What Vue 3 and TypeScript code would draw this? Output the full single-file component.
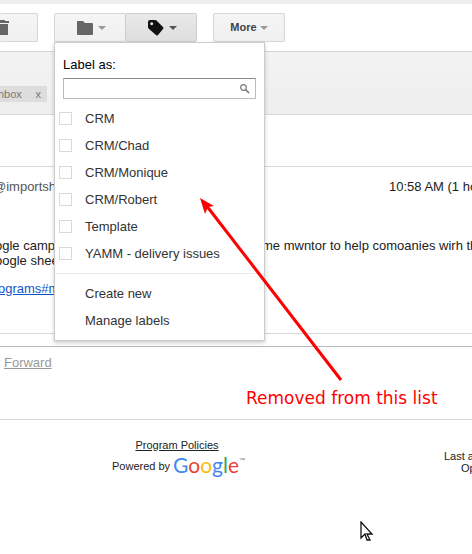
<script setup lang="ts">
import { ref } from 'vue'

interface Label {
  id: string
  name: string
  checked: boolean
}

const query = ref('')
const labels = ref<Label[]>([
  { id: 'crm', name: 'CRM', checked: false },
  { id: 'chad', name: 'CRM/Chad', checked: false },
  { id: 'monique', name: 'CRM/Monique', checked: false },
  { id: 'robert', name: 'CRM/Robert', checked: false },
  { id: 'template', name: 'Template', checked: false },
  { id: 'yamm', name: 'YAMM - delivery issues', checked: false },
])
</script>

<template>
  <div class="page">
    <header class="toolbar">
      <button class="btn trash" type="button" aria-label="Delete">
        <svg width="14" height="16" viewBox="0 0 14 16">
          <path d="M0 1h4V0h6v1h4v2H0zM1 4h12v11H1z" fill="#666" />
        </svg>
      </button>
      <div class="group">
        <button class="btn folder" type="button" aria-label="Move to">
          <svg width="16" height="14" viewBox="0 0 16 14">
            <path d="M1 0h5l2 2h7q1 0 1 1v10q0 1-1 1H1q-1 0-1-1V1q0-1 1-1z" fill="#666" />
          </svg>
          <svg class="caret" width="8" height="4" viewBox="0 0 8 4"><path d="M0 0h8L4 4z" fill="#999" /></svg>
        </button>
        <button class="btn tag" type="button" aria-label="Labels">
          <svg width="16" height="16" viewBox="0 0 16 16">
            <path fill-rule="evenodd" d="M2 0h5q1 0 2 1l6 6q1 1 0 2l-5 6q-1 1-2 0L1 9Q0 8 0 7V2Q0 0 2 0zm1.700 2.200a1.500 1.500 0 1 0 .01 0z" fill="#111" />
          </svg>
          <svg class="caret" width="8" height="4" viewBox="0 0 8 4"><path d="M0 0h8L4 4z" fill="#555" /></svg>
        </button>
        <div class="menu">
          <label class="title" for="label-search">Label as:</label>
          <div class="search">
            <input id="label-search" v-model="query" type="text" />
            <svg width="10" height="10" viewBox="0 0 10 10" fill="none" stroke="#777">
              <circle cx="3.500" cy="3.500" r="2.800" stroke-width="1.200" />
              <path d="M5.500 5.500L9 9" stroke-width="1.700" />
            </svg>
          </div>
          <label v-for="label in labels" :key="label.id" class="item">
            <input v-model="label.checked" type="checkbox" />
            <span>{{ label.name }}</span>
          </label>
          <div class="actions">
            <button type="button">Create new</button>
            <button type="button">Manage labels</button>
          </div>
        </div>
      </div>
      <button class="btn more" type="button">
        More
        <svg width="8" height="4" viewBox="0 0 8 4"><path d="M0 0h8L4 4z" fill="#999" /></svg>
      </button>
    </header>

    <section class="subject">
      <span class="chip">nbox <button type="button" aria-label="Remove label">x</button></span>
    </section>

    <main>
      <article class="message">
        <div class="meta"><span>@importsh</span><time>10:58 AM (1 ho</time></div>
        <div class="body">
          <p><span class="lead">ogle camp</span><span>me mwntor to help comoanies wirh th</span></p>
          <p>oogle shee</p>
          <p class="link"><a href="#programs">ograms#m</a></p>
        </div>
      </article>
      <div class="reply"><span>r</span> <a href="#forward">Forward</a></div>
    </main>

    <footer>
      <div class="policies">
        <a href="#policies">Program Policies</a>
        <div class="powered">
          Powered by
          <span class="logo"><i class="blue">G</i><i class="red">o</i><i class="yellow">o</i><i class="blue">g</i><i class="green">l</i><i class="red">e</i></span><span class="tm">™</span>
        </div>
      </div>
      <div class="activity"><div>Last a</div><div class="open">Op</div></div>
    </footer>

    <svg class="arrow" width="146" height="186" viewBox="0 0 146 186">
      <path d="M6 7L141 182" stroke="#f00" stroke-width="3" />
      <path d="M0 0L14 8L8 9L5 16z" fill="#f00" />
    </svg>
    <div class="note">Removed from this list</div>
    <svg class="pointer" width="14" height="21" viewBox="0 0 14 21">
      <path d="M1 1v16l4-4 2 6h3l-3-6h5z" fill="#fff" stroke="#111" stroke-width="1.300" />
    </svg>
  </div>
</template>

<style>
body {
  background: #fff;
  overflow: hidden;
}
</style>

<style scoped>
.page {
  position: relative;
  overflow: hidden;
  min-height: 100vh;
  font: 13px/15px "Liberation Sans", Arial, sans-serif;
  color: #222;
  white-space: nowrap;
}
.page * {
  box-sizing: border-box;
}
button {
  font: inherit;
  color: inherit;
  margin: 0;
}
p {
  margin: 0;
}
.toolbar {
  display: flex;
  gap: 16px;
  height: 52px;
  padding-top: 9px;
  border-top: 4px solid #eee;
  border-bottom: 1px solid #d4d4d4;
}
.btn {
  display: flex;
  align-items: center;
  justify-content: center;
  height: 29px;
  padding: 0;
  border: 1px solid #d6d6d6;
  border-radius: 2px;
  background: linear-gradient(#f5f5f5, #f0f0f0);
}
.trash {
  width: 38px;
  padding-right: 34px;
  border-left: 0;
}
.trash svg {
  flex: none;
}
.group {
  position: relative;
  display: flex;
}
.folder,
.tag,
.more {
  width: 72px;
  gap: 5px;
}
.folder svg:first-child,
.tag svg:first-child {
  margin-left: 2px;
}
.tag {
  margin-left: -1px;
  border-color: #ccc;
  background: linear-gradient(#e9e9e9, #dedede);
}
.more {
  gap: 3px;
  font-size: 11px;
  font-weight: bold;
  color: #444;
}
.menu {
  position: absolute;
  z-index: 2;
  top: 29px;
  left: 0;
  width: 211px;
  padding: 14px 0 6px;
  border: 1px solid #ccc;
  background: #fff;
  box-shadow: 0 2px 4px rgba(0, 0, 0, 0.2);
}
.title {
  display: block;
  padding-left: 8px;
  color: #000;
}
.search {
  display: flex;
  align-items: center;
  height: 21px;
  margin: 6px 8px;
  padding-right: 5px;
  border: 1px solid #bbb;
  border-top-color: #888;
}
.search input {
  flex: 1;
  min-width: 0;
  padding: 0 4px;
  border: 0;
  outline: 0;
  background: none;
  font: inherit;
}
.item {
  display: flex;
  align-items: center;
  gap: 13px;
  height: 27px;
  padding-left: 4px;
  color: #333;
}
.item input {
  appearance: none;
  width: 13px;
  height: 13px;
  margin: 0;
  border: 1px solid #d9d9d9;
}
.actions {
  margin-top: 6px;
  padding-top: 6px;
  border-top: 1px solid #ebebeb;
}
.actions button {
  display: block;
  width: 100%;
  height: 27px;
  padding: 0 30px;
  border: 0;
  background: none;
  text-align: left;
  color: #333;
}
.subject {
  height: 63px;
  padding-top: 34px;
  border-bottom: 1px solid #d8d8d8;
  background: linear-gradient(#f3f3f3, #eee);
}
.chip {
  display: flex;
  justify-content: space-between;
  width: 47px;
  height: 16px;
  padding-right: 6px;
  background: #ddd;
  font-size: 11px;
  line-height: 16px;
  text-indent: -2px;
  color: #777;
}
.chip button {
  padding: 0;
  border: 0;
  background: none;
  line-height: 16px;
  text-indent: 0;
}
.message {
  height: 168px;
  margin-top: 51px;
  border-top: 1px solid #d8d8d8;
  border-bottom: 1px solid #d8d8d8;
}
.meta {
  display: flex;
  justify-content: space-between;
  margin-top: 12px;
  margin-left: -7px;
}
.meta span {
  color: #555;
}
.meta time {
  width: 83px;
}
.body {
  margin-top: 44px;
  margin-left: -5px;
}
.body p {
  display: flex;
}
.lead {
  flex: 0 0 267px;
}
.body .link {
  margin-top: 13px;
  padding-left: 3px;
}
.body a {
  color: #15c;
}
.reply {
  height: 74px;
  margin-top: 12px;
  margin-left: -4px;
  padding-top: 8px;
  border-top: 1px solid #bbb;
  border-bottom: 1px solid #d8d8d8;
  color: #999;
}
.reply a {
  color: #999;
}
footer {
  display: flex;
  justify-content: space-between;
  padding-top: 18px;
  padding-left: 112px;
  font-size: 11px;
}
.policies {
  width: 130px;
  text-align: center;
}
.policies a {
  color: #222;
}
.powered {
  display: flex;
  align-items: center;
  height: 26px;
  gap: 3px;
}
.logo {
  height: 26px;
  font: 21px/24px Lato, sans-serif;
  -webkit-text-stroke: 0;
}
.logo i {
  font-style: normal;
}
.tm {
  align-self: flex-start;
  margin-left: -3px;
  font-size: 6px;
  color: #777;
}
.blue {
  color: #4285f4;
}
.red {
  color: #ea4335;
}
.yellow {
  color: #fbbc05;
}
.green {
  color: #34a853;
}
.activity {
  width: 28px;
  padding-top: 12px;
  line-height: 12px;
}
.open {
  padding-left: 17px;
}
.arrow {
  position: absolute;
  z-index: 3;
  top: 198px;
  left: 200px;
}
.note {
  position: absolute;
  z-index: 3;
  top: 388px;
  left: 246px;
  font: 17px/21px "DejaVu Sans", sans-serif;
  color: #f00;
}
.pointer {
  position: absolute;
  top: 521px;
  left: 360px;
}
</style>
